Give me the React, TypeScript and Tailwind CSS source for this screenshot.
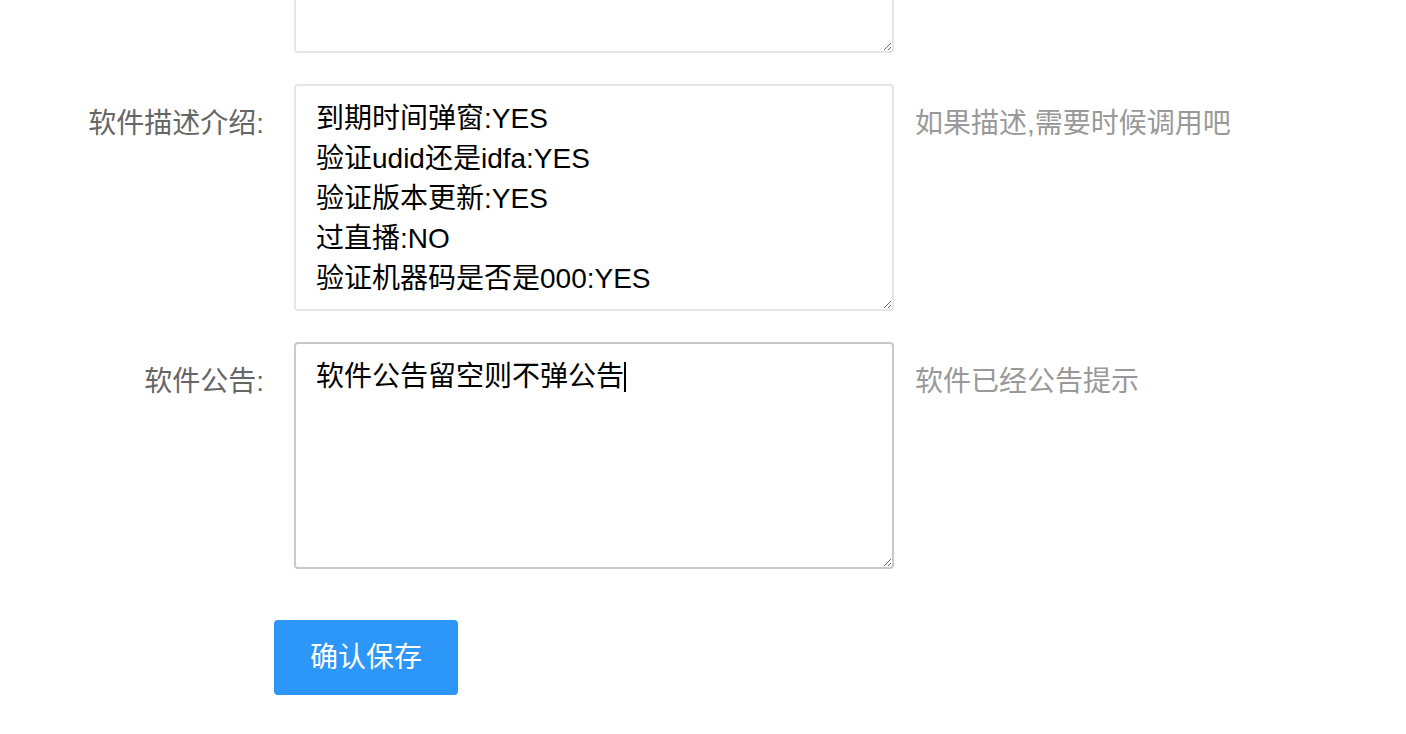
import { useEffect, useRef } from "react";

const font = {
  fontFamily: '"Liberation Sans", "Noto Sans CJK SC", sans-serif',
};

const desc = "到期时间弹窗:YES\n验证udid还是idfa:YES\n验证版本更新:YES\n过直播:NO\n验证机器码是否是000:YES";
const notice = "软件公告留空则不弹公告";

function Row({ label, hint, children }: { label?: string; hint?: string; children: React.ReactNode }) {
  return (
    <div className="flex items-start">
      <div className="w-[264px] shrink-0 pt-[20px] text-right text-[28px] leading-[40px] text-[#666]">{label}</div>
      <div className="relative ml-[30px]">{children}</div>
      {hint && <div className="ml-[21px] pt-[20px] text-[28px] leading-[40px] text-[#999]">{hint}</div>}
    </div>
  );
}

export default function App() {
  const noticeRef = useRef<HTMLTextAreaElement>(null);

  useEffect(() => {
    const el = noticeRef.current;
    if (el) {
      el.focus();
      el.setSelectionRange(notice.length, notice.length);
    }
  }, []);

  const area =
    "block w-[600px] h-[227px] rounded-[4px] border-2 border-[#e6e6e6] bg-white px-[20px] pt-[13px] text-[28px] leading-[40px] text-black outline-none";

  return (
    <div className="h-screen w-full overflow-hidden bg-white" style={font}>
      <div className="flex flex-col gap-[31px]">
        {/* scrolled-off field above */}
        <div className="-mt-[174px]">
          <Row>
            <textarea className={area} defaultValue="" />
          </Row>
        </div>

        <Row label="软件描述介绍:" hint="如果描述,需要时候调用吧">
          <textarea className={area} defaultValue={desc} />
        </Row>

        <Row label="软件公告:" hint="软件已经公告提示">
          <textarea
            ref={noticeRef}
            className={area + " focus:border-[#c9c9c9] caret-transparent"}
            defaultValue={notice}
          />
          {/* caret */}
          <span className="pointer-events-none absolute left-[330px] top-[20px] h-[30px] w-[2px] bg-black" />
        </Row>

        <div className="ml-[274px] mt-[20px]">
          <button className="h-[75px] w-[184px] rounded-[4px] bg-[#2c96f9] text-[28px] text-white">确认保存</button>
        </div>
      </div>
    </div>
  );
}
